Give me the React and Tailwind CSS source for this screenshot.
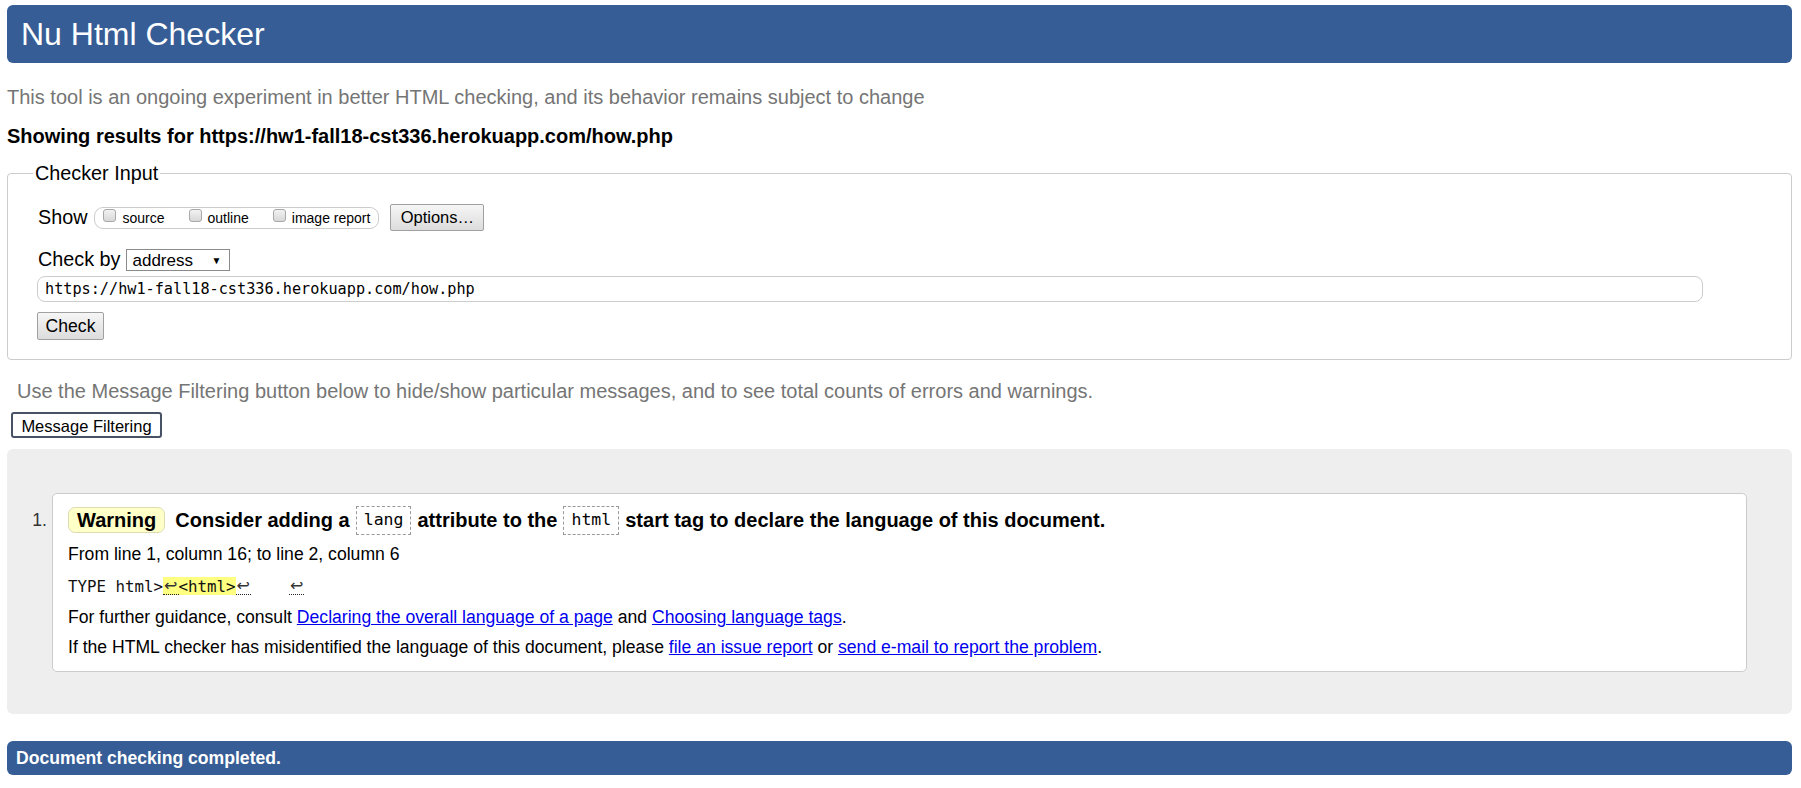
import React from "react";

function Box({ label }) {
  return (
    <span className="flex items-center">
      <span className="mt-[1px] self-start block h-[13px] w-[13px] rounded-[3px] border border-[#a8a8a8] bg-gradient-to-b from-[#f2f2f2] to-[#d8d8d8]" />
      <span className="ml-[6px] text-[14px] leading-[20px]">{label}</span>
    </span>
  );
}

function Arrow() {
  return (
    <span className="inline-flex h-full w-[15.4px] items-center justify-center border-b border-dotted border-[#222] font-['DejaVu_Sans',sans-serif] text-[16px] leading-none text-[#333]">
      ↩
    </span>
  );
}

export default function App() {
  return (
    <div className="h-[788px] w-full overflow-hidden bg-white font-['Liberation_Sans',Arial,sans-serif] text-[17.6px] text-black">
      <h1 className="ml-[7px] mr-[9px] mt-[5px] flex h-[58px] items-center rounded-[6px] bg-[#365d95] pl-[14px] text-[32px] font-normal text-white">
        Nu Html Checker
      </h1>
      <p className="ml-[7px] mt-[22px] text-[20px] leading-[24px] text-[#757575]">
        This tool is an ongoing experiment in better HTML checking, and its behavior remains subject to change
      </p>
      <p className="ml-[7px] mt-[15px] text-[20px] font-bold leading-[24px]">
        Showing results for https://hw1-fall18-cst336.herokuapp.com/how.php
      </p>

      <fieldset className="ml-[7px] mr-[9px] mt-[13px] rounded-[4px] border border-[#cccccc] pb-[19px] pl-[25px]">
        <legend className="px-[2px] text-[19.8px] leading-[24px]">Checker Input</legend>
        <div className="pl-[5px] pt-[19px]">
          <div className="flex h-[27px] items-center">
            <span className="text-[19.8px]">Show</span>
            <span className="ml-[7px] flex h-[22px] items-center gap-[24px] rounded-[9px] border border-[#cccccc] px-[8px]">
              <Box label="source" />
              <Box label="outline" />
              <Box label="image report" />
            </span>
            <button className="ml-[11px] h-[27px] w-[94px] rounded-[2px] border border-[#a0a0a0] bg-gradient-to-b from-[#f6f6f6] to-[#dcdcdc] text-[16.5px]">
              Options…
            </button>
          </div>
          <div className="mt-[18px] flex h-[22px] items-center">
            <span className="text-[19.8px]">Check by</span>
            <span className="ml-[6px] flex h-[22px] w-[104px] items-center justify-between border border-[#8a8a8a] bg-white pl-[5px] pr-[8px] pt-[1px] text-[17px]">
              <span>address</span>
              <span className="text-[10px]">▼</span>
            </span>
          </div>
          <div className="-ml-[1px] mt-[5px] flex h-[26px] w-[1666px] items-center rounded-[8px] border border-[#cccccc] pl-[7px] font-['DejaVu_Sans_Mono',monospace] text-[15.2px]">
            https://hw1-fall18-cst336.herokuapp.com/how.php
          </div>
          <button className="-ml-[1px] mt-[10px] h-[28px] w-[67px] rounded-[2px] border border-[#a0a0a0] bg-gradient-to-b from-[#f6f6f6] to-[#dcdcdc] text-[17.6px]">
            Check
          </button>
        </div>
      </fieldset>

      <p className="ml-[17px] mt-[19px] text-[20px] leading-[24px] text-[#757575]">
        Use the Message Filtering button below to hide/show particular messages, and to see total counts of errors and warnings.
      </p>
      <button className="ml-[11px] mt-[9px] h-[26px] w-[151px] rounded-[3px] border-2 border-[#475264] bg-white text-[16.5px]">
        Message Filtering
      </button>

      <div className="ml-[7px] mr-[9px] mt-[10px] flex rounded-[6px] bg-[#eeeeee] pb-[42px] pt-[44px]">
        <div className="w-[45px] shrink-0 pr-[5px] pt-[12px] text-right leading-[30px] text-[#333]">1.</div>
        <div className="mr-[45px] flex-1 rounded-[5px] border border-[#cccccc] bg-white pb-[9px] pl-[15px] pt-[11px]">
          <div className="flex h-[30px] items-center text-[20px] font-bold">
            <span className="flex h-[26px] items-center rounded-[7px] border border-[#dcdcb4] bg-[#ffffc8] px-[8px]">Warning</span>
            <span className="ml-[10px]">Consider adding a</span>
            <span className="ml-[6px] flex h-[29px] items-center border border-dashed border-[#999] px-[7px] font-['DejaVu_Sans_Mono',monospace] text-[16.5px] font-normal">lang</span>
            <span className="ml-[6px]">attribute to the</span>
            <span className="ml-[6px] flex h-[29px] items-center border border-dashed border-[#999] px-[7px] font-['DejaVu_Sans_Mono',monospace] text-[16.5px] font-normal">html</span>
            <span className="ml-[6px]">start tag to declare the language of this document.</span>
          </div>
          <p className="mt-[4px] leading-[30px]">From line 1, column 16; to line 2, column 6</p>
          <div className="mt-[2px] flex h-[30px] items-center font-['DejaVu_Sans_Mono',monospace] text-[15.8px] text-[#111]">
            <span className="whitespace-pre">TYPE html&gt;</span>
            <span className="flex h-[18px] items-stretch bg-[#ffff80]">
              <Arrow />
              <span className="flex items-center">&lt;html&gt;</span>
            </span>
            <span className="flex h-[18px] items-stretch">
              <Arrow />
            </span>
            <span className="w-[38px]" />
            <span className="flex h-[18px] items-stretch">
              <Arrow />
            </span>
          </div>
          <p className="mt-[1px] leading-[30px]">
            For further guidance, consult{" "}
            <a className="text-[#0000ee] underline">Declaring the overall language of a page</a> and{" "}
            <a className="text-[#0000ee] underline">Choosing language tags</a>.
          </p>
          <p className="leading-[30px]">
            If the HTML checker has misidentified the language of this document, please{" "}
            <a className="text-[#0000ee] underline">file an issue report</a> or{" "}
            <a className="text-[#0000ee] underline">send e-mail to report the problem</a>.
          </p>
        </div>
      </div>

      <div className="ml-[7px] mr-[9px] mt-[27px] flex h-[34px] items-center rounded-[6px] bg-[#365d95] pl-[9px] font-bold text-white">
        Document checking completed.
      </div>
      <p className="ml-[7px] mt-[10px] leading-[24px]">
        Used the HTML parser. Externally specified character encoding was UTF-8.
      </p>
    </div>
  );
}
